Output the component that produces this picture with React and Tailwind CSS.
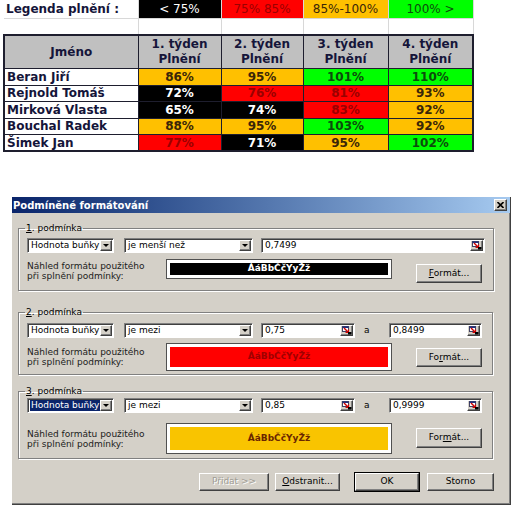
import React from "react";

const fills = {
  o: "bg-[#ffc000] text-[#3a2608]",
  r: "bg-[#ff0000] text-[#9a0000]",
  g: "bg-[#00ff00] text-[#0c4c0c]",
  k: "bg-black text-white",
};

const rows = [
  ["Beran Jiří", ["o", "86%"], ["o", "95%"], ["g", "101%"], ["g", "110%"]],
  ["Rejnold Tomáš", ["k", "72%"], ["r", "76%"], ["r", "81%"], ["o", "93%"]],
  ["Mirková Vlasta", ["k", "65%"], ["k", "74%"], ["r", "83%"], ["o", "92%"]],
  ["Bouchal Radek", ["o", "88%"], ["o", "95%"], ["g", "103%"], ["o", "92%"]],
  ["Šimek Jan", ["r", "77%"], ["k", "71%"], ["o", "95%"], ["g", "102%"]],
];

const legend = [
  ["k", "< 75%"],
  ["r", "75% 85%"],
  ["o", "85%-100%"],
  ["g", "100% >"],
];

const raised =
  "border border-t-white border-l-white border-b-[#404040] border-r-[#404040] shadow-[inset_-1px_-1px_0_#808080] bg-[#d4d0c8]";
const sunken =
  "border border-t-[#808080] border-l-[#808080] border-b-white border-r-white shadow-[inset_1px_1px_0_#404040] bg-white";

function Arrow() {
  return (
    <div className={`mr-px flex h-[11px] w-[12px] shrink-0 items-center justify-center ${raised}`}>
      <span className="block h-0 w-0 border-x-[3px] border-t-[3px] border-x-transparent border-t-black" />
    </div>
  );
}

function Combo({ text, className, selected }) {
  return (
    <div className={`flex h-[15px] shrink-0 items-center overflow-hidden ${sunken} ${className}`}>
      <span
        className={`ml-[2px] whitespace-nowrap px-px leading-[11px] ${
          selected ? "bg-[#0a246a] text-white" : "text-black"
        }`}
      >
        {text}
      </span>
      <div className="ml-auto">
        <Arrow />
      </div>
    </div>
  );
}

function RefIcon() {
  return (
    <div className={`mr-px flex h-[11px] w-[13px] shrink-0 items-center justify-center ${raised}`}>
      <svg width="10" height="9" viewBox="0 0 10 9">
        <rect x="0.5" y="0.5" width="6" height="5" fill="#fff" stroke="#404060" />
        <rect x="0.5" y="0.5" width="6" height="1.5" fill="#203080" />
        <path d="M2 2 L6 6" stroke="#d00000" strokeWidth="1.4" />
        <path d="M6.5 3.5 L6.5 6.5 L3.5 6.5" fill="none" stroke="#d00000" strokeWidth="1.2" />
        <rect x="6" y="6" width="3.5" height="2.5" fill="#000" />
      </svg>
    </div>
  );
}

function RefInput({ text, className }) {
  return (
    <div className={`flex h-[15px] shrink-0 items-center ${sunken} ${className}`}>
      <span className="ml-[3px] whitespace-nowrap leading-[11px] text-black">{text}</span>
      <div className="ml-auto">
        <RefIcon />
      </div>
    </div>
  );
}

function Button({ children, className, disabled }) {
  return (
    <div
      className={`flex shrink-0 items-center justify-center whitespace-nowrap ${raised} ${className} ${
        disabled ? "text-[#a09c94] [text-shadow:1px_1px_0_#fff]" : "text-black"
      }`}
    >
      {children}
    </div>
  );
}

function Preview({ fill, text, className }) {
  return (
    <div className={`w-[226px] shrink-0 border border-[#505050] bg-white p-[3px] ${className}`}>
      <div className={`flex h-full items-center justify-center font-bold ${fill}`}>{text}</div>
    </div>
  );
}

function Group({ label, mnemonic, className, rowClass, previewRow, children }) {
  return (
    <fieldset
      className={`w-[475px] border border-[#808080] px-[8px] shadow-[inset_1px_1px_0_#fff,1px_1px_0_#fff] ${className}`}
    >
      <legend className="ml-[-2px] px-[1px] leading-[12px] text-black">
        <span className="underline">{mnemonic}</span>
        {label}
      </legend>
      <div className={`flex items-center ${rowClass}`}>{children}</div>
      {previewRow}
    </fieldset>
  );
}

function PreviewRow({ fill, textColor, boxClass, btnClass, underlineIdx }) {
  const word = "Formát...";
  return (
    <div className="flex items-start">
      <div className="w-[139px] self-center leading-[10px] text-[#202020]">
        <div className="whitespace-nowrap">Náhled formátu použitého</div>
        <div className="whitespace-nowrap">při splnění podmínky:</div>
      </div>
      <Preview fill={`${fill} ${textColor}`} text="ÁáBbČčYyŽž" className={boxClass} />
      <Button className={`ml-[24px] mt-[5px] w-[66px] ${btnClass}`}>
        {word.slice(0, underlineIdx)}
        <span className="underline">{word[underlineIdx]}</span>
        {word.slice(underlineIdx + 1)}
      </Button>
    </div>
  );
}

function Dialog() {
  return (
    <div
      className="ml-[12px] mt-[45px] flex h-[308px] w-[499px] flex-col border-r border-b border-r-[#404040] border-b-[#404040] bg-[#d4d0c8] shadow-[inset_-1px_-1px_0_#808080]"
      style={{ fontFamily: '"DejaVu Sans", Tahoma, sans-serif', fontSize: "9px" }}
    >
      <div className="flex h-[16px] shrink-0 items-center bg-linear-to-r from-[#0a246a] to-[#a6caf0]">
        <span className="pl-px text-[10px] font-bold text-white">Podmíněné formátování</span>
        <div
          className={`ml-auto mr-[3px] flex h-[12px] w-[13px] items-center justify-center ${raised}`}
        >
          <svg width="7" height="6" viewBox="0 0 7 6">
            <path d="M0.5 0 L6.5 6 M6.5 0 L0.5 6" stroke="#000" strokeWidth="1.6" />
          </svg>
        </div>
      </div>

      <div className="flex flex-col pl-[6px]">
        <Group
          label=". podmínka"
          mnemonic="1"
          className="mt-[9px] pb-[7px]"
          rowClass="mt-[4px] mb-[6px]"
          previewRow={
            <PreviewRow
              fill="bg-black"
              textColor="text-white"
              boxClass="h-[20px]"
              btnClass="h-[19px]"
              underlineIdx={0}
            />
          }
        >
          <Combo text="Hodnota buňky" className="w-[87px]" />
          <Combo text="je menší než" className="ml-[10px] w-[129px]" />
          <RefInput text="0,7499" className="ml-[8px] w-[224px]" />
        </Group>

        <Group
          label=". podmínka"
          mnemonic="2"
          className="mt-[15px] pb-[3px]"
          rowClass="mt-[5px] mb-[5px]"
          previewRow={
            <PreviewRow
              fill="bg-[#ff0000]"
              textColor="text-[#a00000]"
              boxClass="h-[28px]"
              btnClass="h-[19px]"
              underlineIdx={2}
            />
          }
        >
          <Combo text="Hodnota buňky" className="w-[87px]" />
          <Combo text="je mezi" className="ml-[10px] w-[129px]" />
          <RefInput text="0,75" className="ml-[8px] w-[94px]" />
          <span className="ml-[9px] w-[25px] text-black">a</span>
          <RefInput text="0,8499" className="w-[93px]" />
        </Group>

        <Group
          label=". podmínka"
          mnemonic="3"
          className="mt-[10px] pb-[4px]"
          rowClass="mt-[1px] mb-[10px]"
          previewRow={
            <PreviewRow
              fill="bg-[#f9c400]"
              textColor="text-[#6a2600]"
              boxClass="h-[31px]"
              btnClass="h-[20px]"
              underlineIdx={3}
            />
          }
        >
          <Combo text="Hodnota buňky" className="w-[87px]" selected />
          <Combo text="je mezi" className="ml-[10px] w-[129px]" />
          <RefInput text="0,85" className="ml-[8px] w-[94px]" />
          <span className="ml-[9px] w-[25px] text-black">a</span>
          <RefInput text="0,9999" className="w-[93px]" />
        </Group>
      </div>

      <div className="mt-[14px] flex h-[18px] justify-end pr-[16px]">
        <Button className="w-[70px]" disabled>
          Přidat &gt;&gt;
        </Button>
        <Button className="ml-[6px] w-[65px]">
          <span className="underline">O</span>dstranit...
        </Button>
        <Button className="ml-[15px] w-[64px] outline outline-1 outline-black">OK</Button>
        <Button className="ml-[8px] w-[67px]">Storno</Button>
      </div>
    </div>
  );
}

function Sheet() {
  const dark = "border border-[#1e1e2e]";
  const grid = "border border-[#d8d8d8]";
  return (
    <table
      className="ml-[3px] table-fixed border-collapse text-[12px]"
      style={{ fontFamily: '"DejaVu Sans", Tahoma, sans-serif' }}
    >
      <colgroup>
        <col className="w-[134px]" />
        <col className="w-[83px]" />
        <col className="w-[82px]" />
        <col className="w-[85px]" />
        <col className="w-[85px]" />
      </colgroup>
      <tbody>
        <tr className="h-[18px]">
          <td className={`${grid} border-l-0 border-t-0 pl-[2px] font-bold text-[#15153a]`}>
            Legenda plnění :
          </td>
          {legend.map(([c, t]) => (
            <td key={t} className={`${grid} border-t-0 text-center ${fills[c]}`}>
              {t}
            </td>
          ))}
        </tr>
        <tr className="h-[16px]">
          {[0, 1, 2, 3, 4].map((i) => (
            <td key={i} className={`${grid} ${i === 0 ? "border-l-0" : ""}`} />
          ))}
        </tr>
        <tr className="h-[34px] bg-[#c0c0c0] text-[#15153a]">
          <td className={`${dark} border-t-2 border-l-2 text-center font-bold`}>Jméno</td>
          {[1, 2, 3, 4].map((n) => (
            <td
              key={n}
              className={`${dark} border-t-2 text-center font-bold leading-[15px] ${
                n === 4 ? "border-r-2" : ""
              }`}
            >
              {n}. týden
              <br />
              Plnění
            </td>
          ))}
        </tr>
        {rows.map(([name, ...cells], ri) => (
          <tr key={name} className="h-[16.5px]">
            <td
              className={`${dark} border-l-2 bg-white pl-[2px] font-bold leading-[14px] text-[#15153a] ${
                ri === rows.length - 1 ? "border-b-2" : ""
              }`}
            >
              {name}
            </td>
            {cells.map(([c, t], ci) => (
              <td
                key={ci}
                className={`${dark} text-center font-bold leading-[14px] ${fills[c]} ${
                  ci === 3 ? "border-r-2" : ""
                } ${ri === rows.length - 1 ? "border-b-2" : ""}`}
              >
                {t}
              </td>
            ))}
          </tr>
        ))}
      </tbody>
    </table>
  );
}

export default function App() {
  return (
    <div className="h-[518px] w-[526px] overflow-hidden bg-white">
      <Sheet />
      <Dialog />
    </div>
  );
}
